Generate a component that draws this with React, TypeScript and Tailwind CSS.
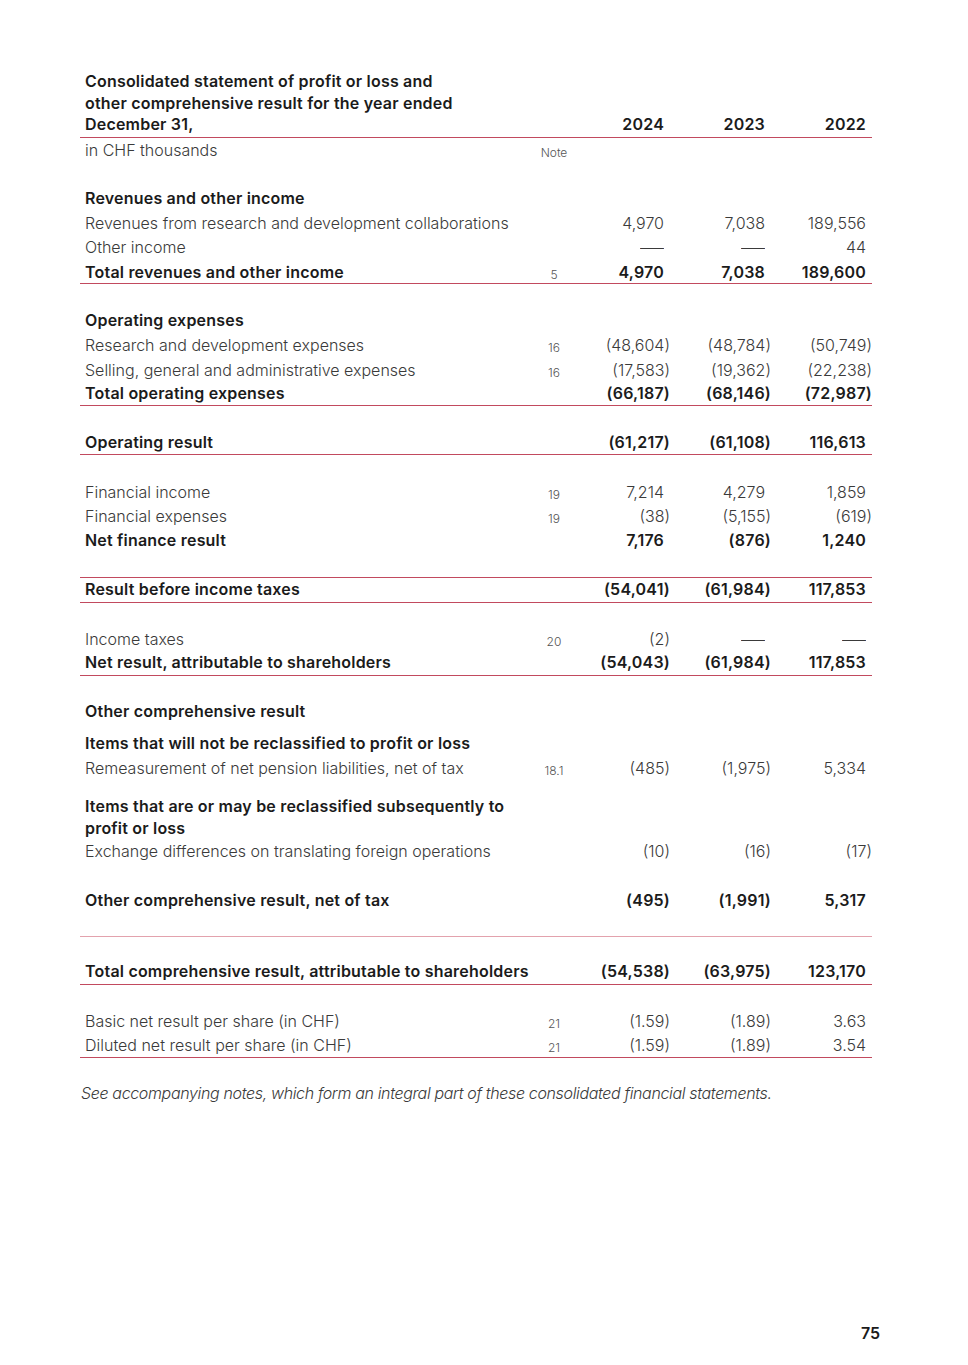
import React from "react";

type Row =
  | { kind: "blank"; h?: string; rule?: "dark" | "light" }
  | {
      kind: "line";
      label: string;
      note?: string;
      values?: string[];
      bold?: boolean;
      rule?: "dark" | "light";
    };

const GRID = "grid grid-cols-[450px_48px_92px_101px_101px]";
const BOLD = "font-semibold tracking-[0.2px] text-[#1b1b1b]";
const LIGHT = "font-light text-[#3a3a3a]";

function Value({ v, bold }: { v: string; bold?: boolean }) {
  const paren = v.startsWith("(");
  if (v === "—") {
    // long thin dash used for nil values
    return (
      <div className={`text-right pr-[6px] ${LIGHT}`}>
        <span className="inline-block origin-right scale-x-150">—</span>
      </div>
    );
  }
  return (
    <div className={`text-right ${paren ? "" : "pr-[6px]"} ${bold ? BOLD : LIGHT}`}>
      {v}
    </div>
  );
}

function Line({ row }: { row: Row }) {
  if (row.kind === "blank") {
    return (
      <div
        className={`${row.h ?? "h-[24.4px]"} ${
          row.rule === "light" ? "border-b-[1.5px] border-[#e3a2ad]" : ""
        }`}
      />
    );
  }
  return (
    <div
      className={`${GRID} h-[24.4px] items-center ${
        row.rule ? "border-b border-[#c24a5e]" : ""
      }`}
    >
      <div className={`pl-[5px] whitespace-nowrap ${row.bold ? BOLD : LIGHT}`}>
        {row.label}
      </div>
      <div className="text-center text-[12px] font-light text-[#555] pt-[4px]">
        {row.note ?? ""}
      </div>
      {row.values ? (
        row.values.map((v, i) => <Value key={i} v={v} bold={row.bold} />)
      ) : (
        <>
          <div />
          <div />
          <div />
        </>
      )}
    </div>
  );
}

const top: Row[] = [
  { kind: "blank" },
  { kind: "line", label: "Revenues and other income", bold: true },
  {
    kind: "line",
    label: "Revenues from research and development collaborations",
    values: ["4,970", "7,038", "189,556"],
  },
  { kind: "line", label: "Other income", values: ["—", "—", "44"] },
  {
    kind: "line",
    label: "Total revenues and other income",
    note: "5",
    values: ["4,970", "7,038", "189,600"],
    bold: true,
    rule: "dark",
  },
  { kind: "blank" },
  { kind: "line", label: "Operating expenses", bold: true },
  {
    kind: "line",
    label: "Research and development expenses",
    note: "16",
    values: ["(48,604)", "(48,784)", "(50,749)"],
  },
  {
    kind: "line",
    label: "Selling, general and administrative expenses",
    note: "16",
    values: ["(17,583)", "(19,362)", "(22,238)"],
  },
  {
    kind: "line",
    label: "Total operating expenses",
    values: ["(66,187)", "(68,146)", "(72,987)"],
    bold: true,
    rule: "dark",
  },
  { kind: "blank" },
  {
    kind: "line",
    label: "Operating result",
    values: ["(61,217)", "(61,108)", "116,613"],
    bold: true,
    rule: "dark",
  },
  { kind: "blank" },
  {
    kind: "line",
    label: "Financial income",
    note: "19",
    values: ["7,214", "4,279", "1,859"],
  },
  {
    kind: "line",
    label: "Financial expenses",
    note: "19",
    values: ["(38)", "(5,155)", "(619)"],
  },
  {
    kind: "line",
    label: "Net finance result",
    values: ["7,176", "(876)", "1,240"],
    bold: true,
  },
  { kind: "blank" },
];

const middle: Row[] = [
  { kind: "blank" },
  {
    kind: "line",
    label: "Income taxes",
    note: "20",
    values: ["(2)", "—", "—"],
  },
  {
    kind: "line",
    label: "Net result, attributable to shareholders",
    values: ["(54,043)", "(61,984)", "117,853"],
    bold: true,
    rule: "dark",
  },
  { kind: "blank", h: "h-[23.5px]" },
  { kind: "line", label: "Other comprehensive result", bold: true },
];

const bottom: Row[] = [
  { kind: "blank" },
  {
    kind: "line",
    label: "Other comprehensive result, net of tax",
    values: ["(495)", "(1,991)", "5,317"],
    bold: true,
  },
  { kind: "blank", h: "h-[24.5px]", rule: "light" },
  { kind: "blank", h: "h-[23.5px]" },
  {
    kind: "line",
    label: "Total comprehensive result, attributable to shareholders",
    values: ["(54,538)", "(63,975)", "123,170"],
    bold: true,
    rule: "dark",
  },
  { kind: "blank", h: "h-[24px]" },
  {
    kind: "line",
    label: "Basic net result per share (in CHF)",
    note: "21",
    values: ["(1.59)", "(1.89)", "3.63"],
  },
  {
    kind: "line",
    label: "Diluted net result per share (in CHF)",
    note: "21",
    values: ["(1.59)", "(1.89)", "3.54"],
    rule: "dark",
  },
];

export default function App() {
  return (
    <div className="w-[968px] h-[1365px] bg-white flex flex-col font-['Inter',_'Liberation_Sans',_sans-serif] text-[16px] leading-[21.5px]">
      <div className="ml-[80px] w-[792px] pt-[71px]">
        {/* Header */}
        <div className={`${GRID} items-end border-b border-[#c24a5e] pb-[1px]`}>
          <div className={`col-span-2 pl-[5px] ${BOLD}`}>
            Consolidated statement of profit or loss and
            <br />
            other comprehensive result for the year ended
            <br />
            December 31,
          </div>
          <Value v="2024" bold />
          <Value v="2023" bold />
          <Value v="2022" bold />
        </div>
        <div className={`${GRID} h-[25px] items-center`}>
          <div className={`pl-[5px] ${LIGHT}`}>in CHF thousands</div>
          <div className="text-center text-[12px] font-light text-[#555] pt-[4px]">Note</div>
        </div>

        {top.map((r, i) => (
          <Line key={`t${i}`} row={r} />
        ))}
        <div className="border-t border-[#c24a5e]">
          <Line
            row={{
              kind: "line",
              label: "Result before income taxes",
              values: ["(54,041)", "(61,984)", "117,853"],
              bold: true,
              rule: "dark",
            }}
          />
        </div>
        {middle.map((r, i) => (
          <Line key={`m${i}`} row={r} />
        ))}

        <div className="pt-[8px]">
          <Line row={{ kind: "line", label: "Items that will not be reclassified to profit or loss", bold: true }} />
          <Line
            row={{
              kind: "line",
              label: "Remeasurement of net pension liabilities, net of tax",
              note: "18.1",
              values: ["(485)", "(1,975)", "5,334"],
            }}
          />
        </div>
        <div className="pt-[15px]">
          <div className={`pl-[5px] leading-[22px] ${BOLD}`}>
            Items that are or may be reclassified subsequently to
            <br />
            profit or loss
          </div>
          <Line
            row={{
              kind: "line",
              label: "Exchange differences on translating foreign operations",
              values: ["(10)", "(16)", "(17)"],
            }}
          />
        </div>

        {bottom.map((r, i) => (
          <Line key={`b${i}`} row={r} />
        ))}

        <p className="mt-[24px] pl-[1px] italic font-light tracking-[-0.35px] text-[#3a3a3a] leading-[22px]">
          See accompanying notes, which form an integral part of these consolidated financial statements.
        </p>
      </div>

      <div className="mt-auto pb-[21px] pr-[88px] text-right font-semibold text-[#1b1b1b]">
        75
      </div>
    </div>
  );
}
